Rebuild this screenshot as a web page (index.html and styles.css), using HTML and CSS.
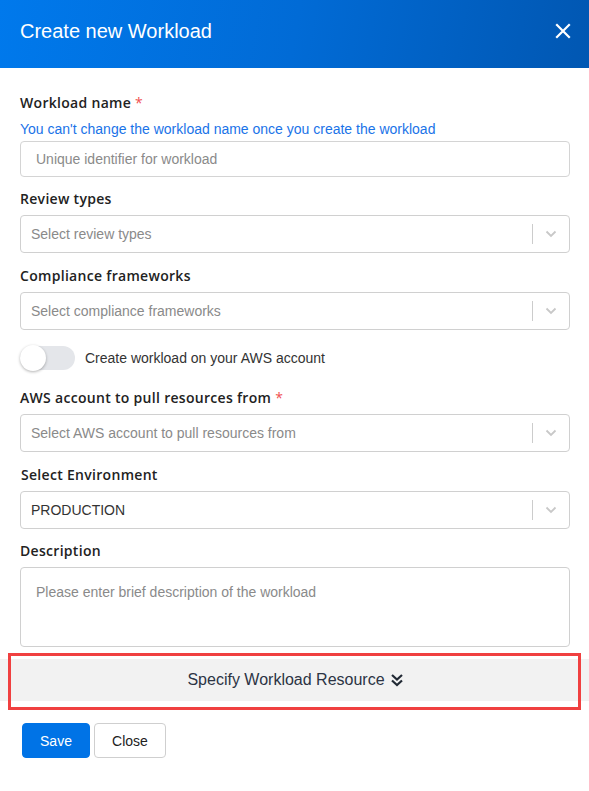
FILE: index.html
```html
<!DOCTYPE html>
<html>
<head>
<meta charset="utf-8">
<link rel="stylesheet" href="styles.css">
</head>
<body>
<div class="modal">
  <div class="modal-header">
    <h1 class="modal-title">Create new Workload</h1>
    <button class="close-x" aria-label="Close">
      <svg width="16" height="16" viewBox="0 0 16 16"><path d="M2 2 L14 14 M14 2 L2 14" stroke="#fff" stroke-width="2.2" stroke-linecap="square"/></svg>
    </button>
  </div>
  <div class="modal-body">
    <div class="field">
      <label class="label">Workload name <span class="req">*</span></label>
      <div class="hint">You can't change the workload name once you create the workload</div>
      <div class="input"><span class="ph">Unique identifier for workload</span></div>
    </div>
    <div class="field">
      <label class="label">Review types</label>
      <div class="select"><span class="ph">Select review types</span><span class="sep"></span><span class="chev"><svg width="12" height="8" viewBox="0 0 12 8"><path d="M1.5 1.5 L6 6 L10.5 1.5" fill="none" stroke="#c8c8c8" stroke-width="1.8"/></svg></span></div>
    </div>
    <div class="field">
      <label class="label label-gap">Compliance frameworks</label>
      <div class="select"><span class="ph">Select compliance frameworks</span><span class="sep"></span><span class="chev"><svg width="12" height="8" viewBox="0 0 12 8"><path d="M1.5 1.5 L6 6 L10.5 1.5" fill="none" stroke="#c8c8c8" stroke-width="1.8"/></svg></span></div>
    </div>
    <div class="toggle-row">
      <span class="toggle"><span class="knob"></span></span>
      <span class="toggle-text">Create workload on your AWS account</span>
    </div>
    <div class="field">
      <label class="label">AWS account to pull resources from <span class="req">*</span></label>
      <div class="select"><span class="ph">Select AWS account to pull resources from</span><span class="sep"></span><span class="chev"><svg width="12" height="8" viewBox="0 0 12 8"><path d="M1.5 1.5 L6 6 L10.5 1.5" fill="none" stroke="#c8c8c8" stroke-width="1.8"/></svg></span></div>
    </div>
    <div class="field">
      <label class="label label-env label-gap">Select Environment</label>
      <div class="select"><span class="val">PRODUCTION</span><span class="sep"></span><span class="chev"><svg width="12" height="8" viewBox="0 0 12 8"><path d="M1.5 1.5 L6 6 L10.5 1.5" fill="none" stroke="#c8c8c8" stroke-width="1.8"/></svg></span></div>
    </div>
    <div class="field">
      <label class="label">Description</label>
      <div class="textarea"><span class="ph">Please enter brief description of the workload</span></div>
    </div>
  </div>
  <div class="specify">
    <div class="specify-bar">
      <span>Specify Workload Resource</span>
      <svg width="14" height="14" viewBox="0 0 14 14"><path d="M2 2 L7 6.5 L12 2 M2 7.5 L7 12 L12 7.5" fill="none" stroke="#222a35" stroke-width="2.2"/></svg>
    </div>
    <div class="highlight"></div>
  </div>
  <div class="footer">
    <button class="btn btn-primary">Save</button>
    <button class="btn btn-default">Close</button>
  </div>
</div>
</body>
</html>
```
FILE: styles.css
```css
* { box-sizing: border-box; }
html, body { margin: 0; padding: 0; background: #fff; }
body { font-family: "Liberation Sans", Arial, sans-serif; width: 589px; }

.modal-header {
  height: 68px;
  background: linear-gradient(100deg, #0079ec 0%, #016bd6 50%, #0157b2 100%);
  display: flex;
  align-items: center;
  justify-content: space-between;
  padding: 0 18px 0 20px;
}
.modal-title {
  margin: 0 0 6px 0;
  font-weight: normal;
  font-size: 20px;
  color: #fff;
}
.close-x {
  border: 0;
  background: transparent;
  padding: 0;
  width: 16px;
  height: 16px;
  margin-bottom: 6px;
  display: flex;
}

.modal-body { padding: 25px 19px 0 20px; }

.field { margin-bottom: 12px; }
.label {
  display: block;
  font-family: "Open Sans", sans-serif;
  font-weight: 600;
  font-size: 14px;
  line-height: 20px;
  color: #222;
  margin-bottom: 6px;
  letter-spacing: 0.3px;
}
.label-gap { padding-top: 1px; }
.label-env { padding-left: 1px; }
.req { color: #f05050; font-weight: 400; }
.hint {
  font-size: 14px;
  line-height: 20px;
  color: #1a73e8;
  margin-top: 0;
  margin-bottom: 2px;
}
.input {
  height: 36px;
  border: 1px solid #d4d4d4;
  border-radius: 4px;
  display: flex;
  align-items: center;
  padding-left: 15px;
  font-size: 14px;
}
.ph { color: #8a8a8a; font-size: 14px; }
.val { color: #333; font-size: 14px; }
.select {
  height: 38px;
  border: 1px solid #d0d0d0;
  border-radius: 4px;
  display: flex;
  align-items: center;
  padding-left: 10px;
}
.select .ph, .select .val { flex: 1; }
.sep {
  width: 1px;
  height: 20px;
  background: #cccccc;
}
.chev {
  width: 36px;
  display: flex;
  justify-content: center;
  align-items: center;
}
.textarea {
  height: 80px;
  border: 1px solid #d0d0d0;
  border-radius: 4px;
  padding: 16px 15px;
  line-height: 16px;
}

.toggle-row {
  display: flex;
  align-items: center;
  margin: 16px 0 18px 0;
  height: 24px;
}
.toggle {
  width: 55px;
  height: 24px;
  border-radius: 12px;
  background: #e4e6ea;
  position: relative;
  display: inline-block;
}
.knob {
  position: absolute;
  left: 0;
  top: -1px;
  width: 26px;
  height: 26px;
  border-radius: 50%;
  background: #fff;
  box-shadow: 0 1px 3px rgba(0,0,0,0.3);
}
.toggle-text {
  margin-left: 10px;
  font-size: 14px;
  color: #333;
}

.specify {
  position: relative;
  padding: 0 0 8px 0;
}
.specify-bar {
  height: 42px;
  background: #f2f2f2;
  display: flex;
  align-items: center;
  justify-content: center;
  gap: 5px;
  font-size: 16px;
  color: #2c3444;
  padding-left: 2px;
}
.highlight {
  position: absolute;
  left: 8px;
  right: 8px;
  top: -6px;
  height: 57px;
  border: 3px solid #f04040;
}

.footer {
  padding: 14px 0 0 22px;
  display: flex;
  gap: 4px;
}
.btn {
  height: 35px;
  border-radius: 4px;
  font-family: "Liberation Sans", Arial, sans-serif;
  font-size: 14px;
  padding: 0;
}
.btn-primary {
  width: 68px;
  background: #0073e6;
  border: 1px solid #0073e6;
  color: #fff;
}
.btn-default {
  width: 72px;
  background: #fff;
  border: 1px solid #cfcfcf;
  color: #222;
}
```
